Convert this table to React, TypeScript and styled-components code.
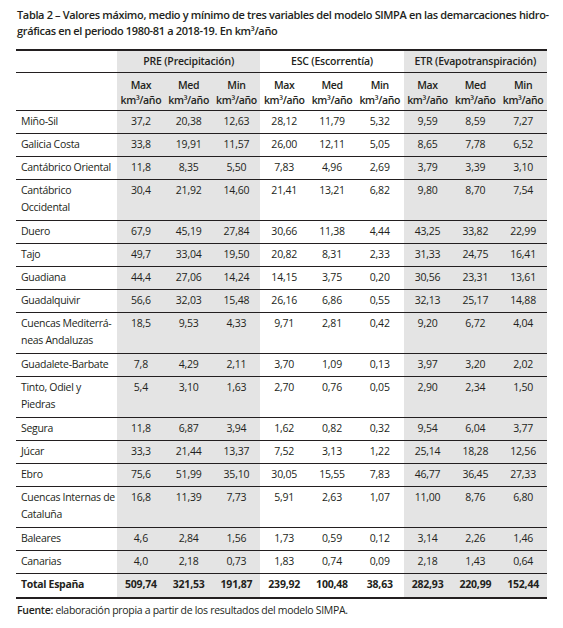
import React from "react";
import styled, { createGlobalStyle } from "styled-components";

const GlobalStyle = createGlobalStyle`
  html, body {
    margin: 0;
    padding: 0;
    background: #ffffff;
  }
  body {
    font-family: "Open Sans", "Liberation Sans", sans-serif;
    color: #231f20;
  }
`;

const SHADE = "#e4e4e4";
const INK = "#231f20";

const Page = styled.div`
  width: 563px;
  height: 628px;
  box-sizing: border-box;
  padding: 7px 16px 0 16px;
`;

const Title = styled.div`
  font-size: 11px;
  font-weight: 600;
  line-height: 16px;
  letter-spacing: -0.35px;
  padding-left: 1px;
  white-space: nowrap;
`;

const Table = styled.div`
  margin-top: 10px;
  width: 531px;
  border-top: 2px solid ${INK};
  border-bottom: 2px solid ${INK};
  font-size: 10.5px;
`;

const GroupRow = styled.div`
  display: grid;
  grid-template-columns: 101px repeat(3, 1fr);
  height: 22px;
  box-sizing: border-box;
  border-bottom: 1px solid ${INK};
`;

const GroupCell = styled.div<{ $shaded?: boolean }>`
  background: ${({ $shaded }) => ($shaded ? SHADE : "transparent")};
  text-align: center;
  line-height: 21px;
  font-weight: 600;
  letter-spacing: -0.2px;
`;

const SubRow = styled.div`
  display: grid;
  grid-template-columns: 101px repeat(9, 1fr);
  height: 38px;
  box-sizing: border-box;
  border-bottom: 1px solid ${INK};
`;

const SubCell = styled.div<{ $shaded?: boolean }>`
  background: ${({ $shaded }) => ($shaded ? SHADE : "transparent")};
  text-align: center;
  padding-top: 5px;
  line-height: 15px;
  font-weight: 600;
  letter-spacing: -0.35px;
  white-space: nowrap;
`;

const Row = styled.div<{ $tall?: boolean; $last?: boolean }>`
  display: grid;
  grid-template-columns: 101px repeat(9, 1fr);
  height: ${({ $tall }) => ($tall ? 41 : 23)}px;
  box-sizing: border-box;
  border-bottom: ${({ $last }) => ($last ? "none" : `1px solid ${INK}`)};
  font-weight: ${({ $last }) => ($last ? 700 : 400)};
`;

const NameCell = styled.div`
  padding: 2px 0 0 5px;
  line-height: 17px;
  white-space: nowrap;
  letter-spacing: -0.3px;
`;

const NumCell = styled.div<{ $shaded?: boolean }>`
  background: ${({ $shaded }) => ($shaded ? SHADE : "transparent")};
  text-align: center;
  padding-top: 2px;
  line-height: 17px;
  white-space: nowrap;
  letter-spacing: -0.2px;
`;

const Source = styled.div`
  margin-top: 4px;
  padding-left: 1px;
  font-size: 10.5px;
  line-height: 14px;
  letter-spacing: -0.3px;

  b {
    font-weight: 600;
  }
`;

type DataRow = { name: string[]; values: string[] };

const rows: DataRow[] = [
  { name: ["Miño-Sil"], values: ["37,2", "20,38", "12,63", "28,12", "11,79", "5,32", "9,59", "8,59", "7,27"] },
  { name: ["Galicia Costa"], values: ["33,8", "19,91", "11,57", "26,00", "12,11", "5,05", "8,65", "7,78", "6,52"] },
  { name: ["Cantábrico Oriental"], values: ["11,8", "8,35", "5,50", "7,83", "4,96", "2,69", "3,79", "3,39", "3,10"] },
  { name: ["Cantábrico", "Occidental"], values: ["30,4", "21,92", "14,60", "21,41", "13,21", "6,82", "9,80", "8,70", "7,54"] },
  { name: ["Duero"], values: ["67,9", "45,19", "27,84", "30,66", "11,38", "4,44", "43,25", "33,82", "22,99"] },
  { name: ["Tajo"], values: ["49,7", "33,04", "19,50", "20,82", "8,31", "2,33", "31,33", "24,75", "16,41"] },
  { name: ["Guadiana"], values: ["44,4", "27,06", "14,24", "14,15", "3,75", "0,20", "30,56", "23,31", "13,61"] },
  { name: ["Guadalquivir"], values: ["56,6", "32,03", "15,48", "26,16", "6,86", "0,55", "32,13", "25,17", "14,88"] },
  { name: ["Cuencas Mediterrá-", "neas Andaluzas"], values: ["18,5", "9,53", "4,33", "9,71", "2,81", "0,42", "9,20", "6,72", "4,04"] },
  { name: ["Guadalete-Barbate"], values: ["7,8", "4,29", "2,11", "3,70", "1,09", "0,13", "3,97", "3,20", "2,02"] },
  { name: ["Tinto, Odiel y", "Piedras"], values: ["5,4", "3,10", "1,63", "2,70", "0,76", "0,05", "2,90", "2,34", "1,50"] },
  { name: ["Segura"], values: ["11,8", "6,87", "3,94", "1,62", "0,82", "0,32", "9,54", "6,04", "3,77"] },
  { name: ["Júcar"], values: ["33,3", "21,44", "13,37", "7,52", "3,13", "1,22", "25,14", "18,28", "12,56"] },
  { name: ["Ebro"], values: ["75,6", "51,99", "35,10", "30,05", "15,55", "7,83", "46,77", "36,45", "27,33"] },
  { name: ["Cuencas Internas de", "Cataluña"], values: ["16,8", "11,39", "7,73", "5,91", "2,63", "1,07", "11,00", "8,76", "6,80"] },
  { name: ["Baleares"], values: ["4,6", "2,84", "1,56", "1,73", "0,59", "0,12", "3,14", "2,26", "1,46"] },
  { name: ["Canarias"], values: ["4,0", "2,18", "0,73", "1,83", "0,74", "0,09", "2,18", "1,43", "0,64"] },
  { name: ["Total España"], values: ["509,74", "321,53", "191,87", "239,92", "100,48", "38,63", "282,93", "220,99", "152,44"] },
];

const groups = ["PRE (Precipitación)", "ESC (Escorrentía)", "ETR (Evapotranspiración)"];
const subs = ["Max", "Med", "Min"];

// PRE and ETR blocks are shaded, ESC is not
const isShaded = (col: number) => Math.floor(col / 3) !== 1;

const App: React.FC = () => {
  return (
    <>
      <GlobalStyle />
      <Page>
        <Title>
          Tabla 2 – Valores máximo, medio y mínimo de tres variables del modelo SIMPA en las demarcaciones hidro-
          <br />
          gráficas en el periodo 1980-81 a 2018-19. En km³/año
        </Title>

        <Table>
          <GroupRow>
            <div />
            {groups.map((g, i) => (
              <GroupCell key={g} $shaded={i !== 1}>
                {g}
              </GroupCell>
            ))}
          </GroupRow>

          <SubRow>
            <div />
            {Array.from({ length: 9 }).map((_, i) => (
              <SubCell key={i} $shaded={isShaded(i)}>
                {subs[i % 3]}
                <br />
                km³/año
              </SubCell>
            ))}
          </SubRow>

          {rows.map((r, idx) => (
            <Row key={r.name.join(" ")} $tall={r.name.length > 1} $last={idx === rows.length - 1}>
              <NameCell>
                {r.name.map((line, j) => (
                  <React.Fragment key={j}>
                    {j > 0 && <br />}
                    {line}
                  </React.Fragment>
                ))}
              </NameCell>
              {r.values.map((v, i) => (
                <NumCell key={i} $shaded={isShaded(i)}>
                  {v}
                </NumCell>
              ))}
            </Row>
          ))}
        </Table>

        <Source>
          <b>Fuente:</b> elaboración propia a partir de los resultados del modelo SIMPA.
        </Source>
      </Page>
    </>
  );
};

export default App;
